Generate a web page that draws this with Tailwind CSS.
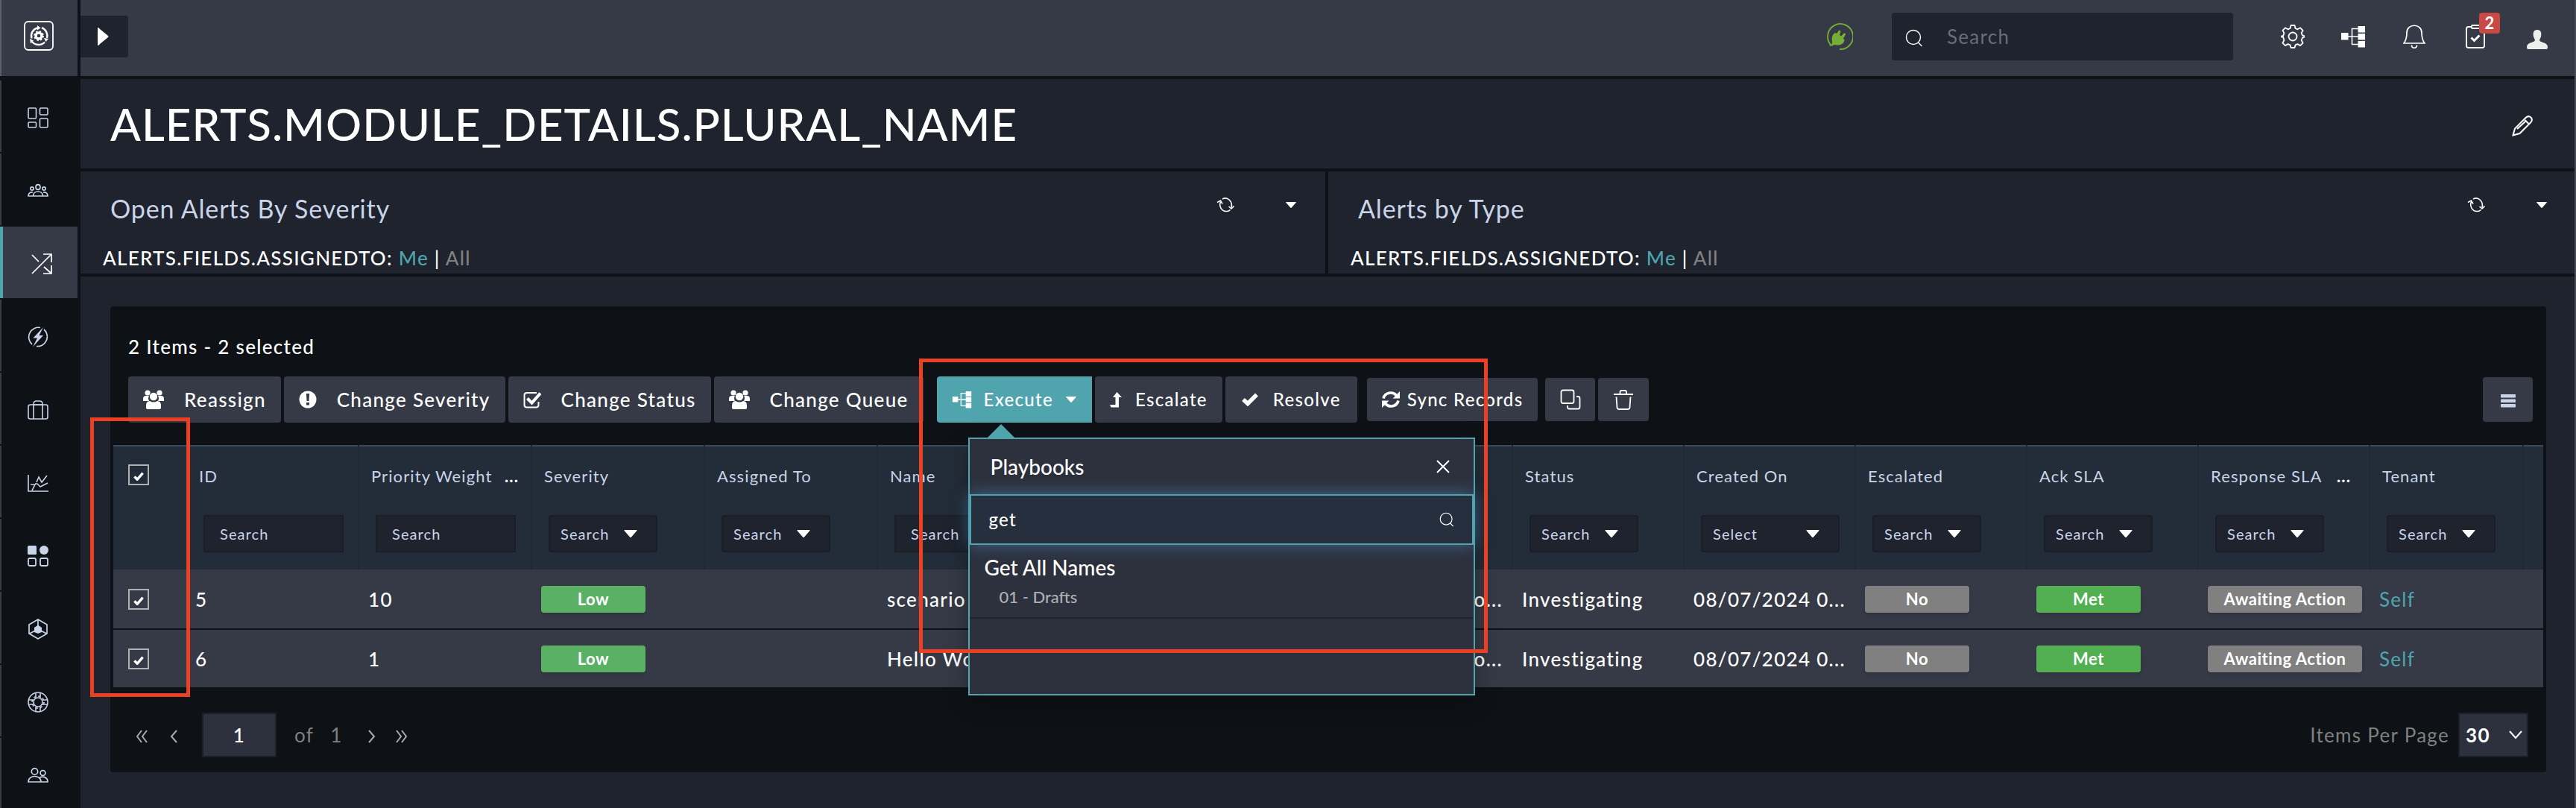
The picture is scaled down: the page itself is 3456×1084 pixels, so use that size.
<!DOCTYPE html>
<html lang="en">
<head>
<meta charset="utf-8">
<title>Alerts</title>
<script src="https://cdn.jsdelivr.net/npm/@tailwindcss/browser@4"></script>
</head>
<body class="bg-[#0e1116]">
<svg class="hidden" aria-hidden="true">
  <symbol id="i-logo" viewBox="0 0 40 40" fill="none" stroke="currentColor">
    <rect x="1" y="1" width="38" height="38" rx="5" stroke-width="1.8"/>
    <path d="M10.5 23.5A11 11 0 0 1 18 9.5M24 9.2A11.5 11.5 0 0 1 31 23M28 28.5A11.5 11.5 0 0 1 11 28" stroke-width="2.4"/>
    <path d="M18 6l4.500 3.500-4.500 3zM33 24l-3.500 4-2.500-5zM8 24l5 2.500-4 4z" fill="currentColor" stroke="none"/>
    <circle cx="20" cy="20" r="4" stroke-width="3.4"/>
    <circle cx="20" cy="20" r="6" stroke-width="1.800" stroke-dasharray="2.400 2.310"/>
  </symbol>
  <symbol id="i-dash" viewBox="0 0 28 28" fill="none" stroke="currentColor" stroke-width="1.6">
    <rect x="1" y="1" width="10.500" height="14" rx="1.200"/><rect x="16.500" y="1" width="10.500" height="9" rx="1.200"/><rect x="1" y="20" width="10.500" height="7" rx="1.200"/><rect x="16.500" y="15" width="10.500" height="12" rx="1.200"/>
  </symbol>
  <symbol id="i-team" viewBox="0 0 28 28" fill="none" stroke="currentColor" stroke-width="1.7">
    <ellipse cx="14" cy="9" rx="3" ry="3.400"/><circle cx="6" cy="11" r="2.200"/><circle cx="22" cy="11" r="2.200"/>
    <path d="M7.500 21c0-8 13-8 13 0zM7 21H1c0-4 2.500-5.500 6-5M21 21h6c0-4-2.500-5.500-6-5"/>
  </symbol>
  <symbol id="i-shuffle" viewBox="0 0 28 28" fill="none" stroke="currentColor" stroke-width="1.7">
    <path d="M1 27L26.500 1.500M16 1h11v11M1 2l9 9M17 18l9.500 8.500M16 27h11V16"/>
  </symbol>
  <symbol id="i-bolt" viewBox="0 0 28 28" fill="none" stroke="currentColor" stroke-width="1.7">
    <path d="M17 1.500A13 13 0 0 0 6 24M22 4A13 13 0 0 1 12 26.600"/><path d="M21 1L7.500 15.500H13L7 27.500 21 12h-5.500z" fill="currentColor" stroke="none"/>
  </symbol>
  <symbol id="i-case" viewBox="0 0 28 28" fill="none" stroke="currentColor" stroke-width="1.6">
    <rect x="1" y="7" width="26" height="19" rx="2.500"/><path d="M8 26V6q0-4 4-4h4q4 0 4 4v20M8 7h12"/>
  </symbol>
  <symbol id="i-chart" viewBox="0 0 28 28" fill="none" stroke="currentColor" stroke-width="1.6">
    <path d="M1 3v22h27M6 24l4-8h-6M10 15h3l4 4 10-5M12 13l3-7 4 7 7-9"/>
  </symbol>
  <symbol id="i-apps" viewBox="0 0 28 28" fill="none" stroke="currentColor" stroke-width="1.8">
    <rect x="0" y="0" width="12" height="12" rx="1.500" fill="currentColor" stroke="none"/><circle cx="22" cy="6" r="6" fill="currentColor" stroke="none"/>
    <rect x="1" y="17" width="10" height="10" rx="2"/><rect x="17" y="17" width="10" height="10" rx="2"/>
  </symbol>
  <symbol id="i-hex" viewBox="0 0 28 28" fill="none" stroke="currentColor" stroke-width="1.7">
    <path d="M14 1l12 7v12l-12 7-12-7V8zM14 1v9M2.500 20l8-4M25.500 20l-8-4"/><path d="M14 8.500l5 3.500v6L14 20l-5-2v-6z" fill="currentColor" stroke="none"/>
  </symbol>
  <symbol id="i-ring" viewBox="0 0 28 28" fill="none" stroke="currentColor" stroke-width="1.6">
    <circle cx="14" cy="14" r="13"/><circle cx="14" cy="14" r="6"/>
    <path d="M11 1.500V8M17 1.500V8M11 20v6.500M17 20v6.500M1.500 11H8M1.500 17H8M20 11h6.500M20 17h6.500"/><circle cx="14" cy="14" r="8" stroke-dasharray="3 3.280"/>
  </symbol>
  <symbol id="i-users" viewBox="0 0 28 28" fill="none" stroke="currentColor" stroke-width="1.7">
    <circle cx="9.500" cy="9" r="4.200"/><circle cx="20.500" cy="11" r="3.400"/><path d="M1 23c0-10 17-10 17 0zM16 17.500c5-3 11-.5 11 5.500h-9"/>
  </symbol>
  <symbol id="i-tree" viewBox="0 0 34 30" fill="none" stroke="currentColor" stroke-width="1.6">
    <path d="M10 15h14M15.500 15V4.500H24M15.500 15v10.500H24"/><path d="M1 10h9.500v9.500H1zM23.500 1H33v8.500h-9.500zM23.500 11H33v8.500h-9.500zM23.500 21H33v8.500h-9.500z" fill="currentColor" stroke="none"/>
  </symbol>
  <symbol id="i-search" viewBox="0 0 24 24" fill="none" stroke="currentColor" stroke-width="1.4">
    <circle cx="11" cy="11" r="9.500"/><path d="M17.500 18l5 5"/>
  </symbol>
  <symbol id="i-people" viewBox="0 0 28 28" fill="currentColor">
    <circle cx="6" cy="5" r="3.600"/><circle cx="22" cy="5" r="3.600"/><path d="M0 16V13q0-4 4-4h4q-2 3 0 7zM28 16V13q0-4-4-4h-4q2 3 0 7z"/><circle cx="14" cy="10" r="5.200"/><path d="M4 25v-3q0-6 5-6 5 3 10 0 5 0 5 6v3q0 2-2 2H6q-2 0-2-2z"/>
  </symbol>
  <symbol id="i-sync" viewBox="0 0 24 24" fill="none" stroke="currentColor" stroke-width="3.6">
    <path d="M2 10.500A10 9.500 0 0 1 19.500 6.500M22 13.500A10 9.500 0 0 1 4.500 17.500"/><path d="M24 1v9.500h-9.500zM0 23v-9.500h9.500z" fill="currentColor" stroke="none"/>
  </symbol>
  <symbol id="i-refresh" viewBox="0 0 24 20" fill="none" stroke="currentColor" stroke-width="1.6">
    <path d="M5.500 5.500C3 12 7 19 14 18.500c2 0 3.500-1 4.500-2M8 2c7-3.500 14 3 12 11.500M1 6.500l4.500-2.500L8 8.500M16.500 12l3.500 3 3.500-3.500"/>
  </symbol>
  <symbol id="i-tick" viewBox="0 0 16 14" fill="none" stroke="currentColor" stroke-width="4">
    <path d="M1.500 7.500l4.300 4.500L14.500 2"/>
  </symbol>
  <symbol id="i-down" viewBox="0 0 18 10" fill="currentColor"><path d="M1 0h16q1 0 .4 1L10 9.500q-1 1-2 0L.6 1Q0 0 1 0z"/></symbol>
</svg>

<div class="relative flex min-h-[1084px] overflow-hidden border-r-2 border-[#474b55] bg-[#0e1116] font-['Lato',sans-serif] text-[26px] leading-8 text-white">

  <!-- Sidebar -->
  <nav aria-label="Main" class="flex h-[1084px] w-[104px] shrink-0 flex-col overflow-hidden text-[#c9d4e8]">
    <a href="#" aria-label="Home" class="flex h-[102px] shrink-0 items-center justify-center border-l-2 border-[#5b5f69] bg-[#353a46] pr-0.5 pb-1.5 text-white"><svg class="size-10"><use href="#i-logo"/></svg></a>
    <div class="flex flex-col gap-0.5 pt-1.5">
      <a href="#" aria-label="Dashboard" class="flex h-24 shrink-0 items-center justify-center border-l-2 border-[#3a3d43] pt-1 pr-1"><svg class="size-7"><use href="#i-dash"/></svg></a>
      <a href="#" aria-label="Queues" class="flex h-24 shrink-0 items-center justify-center border-l-2 border-[#3a3d43] pt-1 pr-1"><svg class="size-7"><use href="#i-team"/></svg></a>
      <a href="#" aria-label="Incident Response" class="flex h-24 shrink-0 items-center justify-center border-l-4 border-[#4fa4ae] bg-[#353a46] pt-1 pl-1 text-white"><svg class="size-7"><use href="#i-shuffle"/></svg></a>
      <a href="#" aria-label="Automation" class="flex h-24 shrink-0 items-center justify-center border-l-2 border-[#3a3d43] pt-1 pr-1"><svg class="size-7"><use href="#i-bolt"/></svg></a>
      <a href="#" aria-label="Resources" class="flex h-24 shrink-0 items-center justify-center border-l-2 border-[#3a3d43] pt-1 pr-1"><svg class="size-7"><use href="#i-case"/></svg></a>
      <a href="#" aria-label="Reports" class="flex h-24 shrink-0 items-center justify-center border-l-2 border-[#3a3d43] pt-1 pr-1"><svg class="size-7"><use href="#i-chart"/></svg></a>
      <a href="#" aria-label="Widgets" class="flex h-24 shrink-0 items-center justify-center border-l-2 border-[#3a3d43] pt-1 pr-1"><svg class="size-7"><use href="#i-apps"/></svg></a>
      <a href="#" aria-label="Content Hub" class="flex h-24 shrink-0 items-center justify-center border-l-2 border-[#3a3d43] pt-1 pr-1"><svg class="size-7"><use href="#i-hex"/></svg></a>
      <a href="#" aria-label="Help" class="flex h-24 shrink-0 items-center justify-center border-l-2 border-[#3a3d43] pt-1 pr-1"><svg class="size-7"><use href="#i-ring"/></svg></a>
      <a href="#" aria-label="Users" class="flex h-24 shrink-0 items-center justify-center border-l-2 border-[#3a3d43] pt-1 pr-1"><svg class="size-7"><use href="#i-users"/></svg></a>
    </div>
  </nav>

  <div class="ml-1 flex min-w-0 flex-1 flex-col gap-1">
    <!-- Top bar -->
    <header class="flex h-[102px] items-center justify-between bg-[#353a46] pr-9 pb-1">
      <button type="button" aria-label="Expand menu" class="flex h-14 w-16 items-center justify-center rounded-r bg-[#1e232e] pr-1"><svg class="h-6 w-4" viewBox="0 0 16 24"><path d="M1 0v24q2 0 3-2l11-9q1-1 0-2L4 2Q3 0 1 0z" fill="currentColor"/></svg></button>
      <div class="flex items-center">
        <svg class="mr-[52px] size-9 text-[#77ae35]" viewBox="0 0 36 36" role="img" aria-label="Connected"><path d="M7 30A17 17 0 1 1 18 35" fill="none" stroke="currentColor" stroke-width="1.800"/><path d="M3 29c5 2 5-2 5-5-1-6 1-9 4-11l2 1 3-4q2-1 2.500 1L18 16l2 1.500 4-4q2.500 0 2 2l-3 5 1.500 2C24 28 18 31 12 29c-4 0-4 4-9 0z" fill="currentColor"/></svg>
        <label class="mr-16 flex h-16 w-[458px] items-center gap-8 rounded bg-[#1e232e] pr-5 pl-[18px]">
          <svg class="mt-1 size-6 shrink-0"><use href="#i-search"/></svg>
          <input type="search" placeholder="Search" aria-label="Search" class="w-full min-w-0 bg-transparent tracking-wider outline-none placeholder:text-[#686d77]">
        </label>
        <div class="flex items-center">
          <button type="button" aria-label="Settings" class="mr-12"><svg class="size-8" viewBox="0 0 32 32" fill="none" stroke="currentColor" stroke-width="1.800"><path d="M13.500 1h5l1 4 3 1.300 3.600-2 3.500 3.500-2 3.600 1.400 3 3 1v1.200l-3 1-1.400 3.400 2 3.600-3.500 3.500-3.600-2-3 1.300-1 3.600h-5l-1-3.600-3-1.300-3.600 2-3.500-3.500 2-3.600L3 16.600H1v-1.200h2l1.400-4-2-3.600L5.900 4.300l3.600 2 3-1.300z" stroke-linejoin="round"/><circle cx="16" cy="16" r="5.500"/></svg></button>
          <button type="button" aria-label="Playbooks" class="mr-[50px]"><svg class="h-[30px] w-[34px]"><use href="#i-tree"/></svg></button>
          <button type="button" aria-label="Notifications" class="mr-[54px]"><svg class="h-8 w-[30px]" viewBox="0 0 30 32" fill="none" stroke="currentColor" stroke-width="1.700"><path d="M1 25C5 20 5 15 5 11 5-2 25-2 25 11c0 4 0 9 4 14z"/><path d="M11.500 27.500c0 5 7 5 7 0"/></svg></button>
          <button type="button" aria-label="Pending tasks" class="relative mr-14"><svg class="h-8 w-[26px]" viewBox="0 0 26 32" fill="none" stroke="currentColor" stroke-width="1.800"><path d="M7 3H3.500Q1 3 1 5.500v23Q1 31 3.500 31h19q2.500 0 2.500-2.500v-23Q25 3 22.500 3H19"/><rect x="8" y="1" width="11" height="4" rx="1"/><path d="M7.500 17.500l4 4 7-7" stroke-width="3"/></svg><span class="absolute -top-4 left-[18px] flex h-7 w-7 items-center justify-center rounded bg-[#c94945] text-[22px] font-bold">2</span></button>
          <button type="button" aria-label="Profile" class="text-[#eeeeee]"><svg class="mt-2 h-[26px] w-7" viewBox="0 0 28 26" fill="currentColor"><path d="M14 0c5 0 6 4 5 9-.5 2-1.500 3-2 5 0 3 11 2.500 11 9 0 2-.5 3-2 3H2c-1.500 0-2-1-2-3 0-6.500 11-6 11-9-.5-2-1.500-3-2-5-1-5 0-9 5-9z"/></svg></button>
        </div>
      </div>
    </header>

    <!-- Page title -->
    <div class="flex h-[120px] items-center justify-between bg-[#1e232e] pr-14 pl-10">
      <h1 class="text-[60px] leading-[72px] font-medium tracking-[1px]">ALERTS.MODULE_DETAILS.PLURAL_NAME</h1>
      <button type="button" aria-label="Edit page" class="pt-1.5"><svg class="size-7" viewBox="0 0 28 28" fill="none" stroke="currentColor" stroke-width="2"><path d="M1.500 26.500l2.500-9L18.500 3q3.500-3.500 7-.5 3 3.500-.5 7L10.500 24zM17.500 6l5 5M7 18l11-10"/></svg></button>
    </div>

    <!-- Summary widgets -->
    <div class="flex gap-1">
      <section class="h-[137px] w-[1670px] shrink-0 bg-[#1e232e]">
        <div class="flex items-center justify-between pt-[30px] pr-[38px] pl-10">
          <h2 class="text-[34px] leading-10 tracking-wide text-[#c9d4e8]">Open Alerts By Severity</h2>
          <div class="flex items-center gap-[68px] pb-2.5"><button type="button" aria-label="Refresh"><svg class="h-5 w-6"><use href="#i-refresh"/></svg></button><button type="button" aria-label="Collapse"><svg class="h-2 w-4"><use href="#i-down"/></svg></button></div>
        </div>
        <p class="mt-[30px] pl-[30px] font-medium tracking-wider">ALERTS.FIELDS.ASSIGNEDTO: <a href="#" class="text-[#4fa4ae]">Me</a> | <a href="#" class="text-[#808080]">All</a></p>
      </section>
      <section class="h-[137px] min-w-0 flex-1 bg-[#1e232e]">
        <div class="flex items-center justify-between pt-[30px] pr-9 pl-10">
          <h2 class="text-[34px] leading-10 tracking-wide text-[#c9d4e8]">Alerts by Type</h2>
          <div class="flex items-center gap-[68px] pb-2.5"><button type="button" aria-label="Refresh"><svg class="h-5 w-6"><use href="#i-refresh"/></svg></button><button type="button" aria-label="Collapse"><svg class="h-2 w-4"><use href="#i-down"/></svg></button></div>
        </div>
        <p class="mt-[30px] pl-[30px] font-medium tracking-wider">ALERTS.FIELDS.ASSIGNEDTO: <a href="#" class="text-[#4fa4ae]">Me</a> | <a href="#" class="text-[#808080]">All</a></p>
      </section>
    </div>

    <!-- Records grid -->
    <main class="flex-1 bg-[#1e232e] pt-10 pr-[38px] pb-12 pl-10">
      <div class="rounded bg-[#0e1116] px-1 pt-[38px] pb-5">
        <p class="pl-5 font-medium tracking-wider">2 Items - 2 selected</p>

        <div class="mt-6 flex items-center pr-[14px] pl-5 font-medium tracking-wider">
          <button type="button" class="mr-1 flex h-[62px] items-center gap-[27px] rounded bg-[#353a46] px-5"><svg class="size-7"><use href="#i-people"/></svg>Reassign</button>
          <button type="button" class="mr-1 flex h-[62px] items-center gap-[27px] rounded bg-[#353a46] px-5"><svg class="size-6" viewBox="0 0 24 24"><circle cx="12" cy="12" r="11.500" fill="currentColor"/><path d="M9.800 4h4.400l-.8 10h-2.800zM10 16h4v3.500h-4z" fill="#353a46"/></svg>Change Severity</button>
          <button type="button" class="mr-1 flex h-[62px] items-center gap-[27px] rounded bg-[#353a46] px-5"><svg class="size-6" viewBox="0 0 24 24" fill="none" stroke="currentColor"><path d="M18 3H5Q1.500 3 1.500 6v13q0 3.500 3.500 3.500h12q3.500 0 3.500-3.500v-4" stroke-width="2"/><path d="M5.500 10.500l6 6L23 3.500" stroke-width="4"/></svg>Change Status</button>
          <button type="button" class="mr-[18px] flex h-[62px] items-center gap-[27px] rounded bg-[#353a46] px-5"><svg class="size-7"><use href="#i-people"/></svg>Change Queue</button>

          <div class="relative mr-1 text-[24px]">
            <button type="button" aria-expanded="true" class="flex h-[62px] items-center gap-4 rounded-l bg-[#4fa4ae] px-5"><svg class="h-6 w-[27px]"><use href="#i-tree"/></svg>Execute<svg class="h-2 w-4"><use href="#i-down"/></svg></button>

            <!-- Playbook picker -->
            <div class="absolute top-[82px] left-[42px] z-20 h-[346px] w-[680px] border-2 border-[#4fa4ae] bg-[#2c313d] tracking-normal shadow-[0_10px_30px_rgba(0,0,0,0.3)]">
              <svg class="absolute -top-5 left-6 h-[18px] w-9 text-[#4fa4ae]" viewBox="0 0 36 18"><path d="M18 0l18 18H0z" fill="currentColor"/></svg>
              <div class="flex h-[74px] items-center justify-between pr-8 pl-7">
                <h3 class="text-[28px]">Playbooks</h3>
                <button type="button" aria-label="Close"><svg class="size-[18px]" viewBox="0 0 18 18" fill="none" stroke="currentColor" stroke-width="2"><path d="M1 1l16 16M17 1L1 17"/></svg></button>
              </div>
              <label class="flex h-[68px] items-center border-2 border-[#4fa4ae] bg-[#262f3e] px-6 shadow-[0_0_20px_rgba(90,150,210,0.55)]">
                <input type="text" value="get" aria-label="Search playbooks" class="min-w-0 flex-1 bg-transparent tracking-wider outline-none">
                <svg class="size-5"><use href="#i-search"/></svg>
              </label>
              <a href="#" class="flex h-[99px] flex-col border-b-2 border-[#20242c] pt-3.5 pl-5">
                <span class="text-[28px]">Get All Names</span>
                <span class="mt-2 pl-5 text-[22px] text-[#aeb0b4]">01 - Drafts</span>
              </a>
            </div>
          </div>

          <button type="button" class="mr-1 flex h-[62px] items-center gap-[18px] rounded bg-[#353a46] px-5 text-[24px]"><svg class="h-[21px] w-4" viewBox="0 0 16 21" fill="currentColor"><path d="M9.500 0L16 7h-4v13.500H1.500L0 17h7.500V7H4z"/></svg>Escalate</button>
          <button type="button" class="mr-[13px] flex h-[62px] items-center gap-5 rounded bg-[#353a46] px-[22px] text-[24px]"><svg class="h-[18px] w-[22px]" viewBox="0 0 22 18" fill="none" stroke="currentColor" stroke-width="5.500"><path d="M2 9l6 5.500L20 2.500"/></svg>Resolve</button>
          <button type="button" class="mr-2.5 flex h-[58px] items-center gap-2.5 rounded bg-[#353a46] px-5 text-[24px]"><svg class="size-6"><use href="#i-sync"/></svg>Sync Records</button>
          <button type="button" aria-label="Clone" class="mr-1 flex h-[58px] w-[67px] items-center justify-center rounded bg-[#353a46]"><svg class="size-7" viewBox="0 0 28 28" fill="none" stroke="currentColor" stroke-width="1.800"><rect x="1.500" y="1.500" width="17" height="17.500" rx="2.500"/><path d="M22 10h2q2.500 0 2.500 2.500V24q0 2.500-2.500 2.500H12.500Q10 26.500 10 24v-2"/></svg></button>
          <button type="button" aria-label="Delete" class="flex h-[58px] w-[68px] items-center justify-center rounded bg-[#353a46]"><svg class="size-7" viewBox="0 0 28 28" fill="none" stroke="currentColor" stroke-width="1.800"><path d="M1 7h26M9.500 7V4q0-2 2-2h4.500q2 0 2 2v3M4.500 10.500l1 14q.2 2.500 2.500 2.500h12q2.300 0 2.500-2.500l1-14"/></svg></button>
          <button type="button" aria-label="Grid menu" class="ml-auto flex h-[60px] w-[67px] items-center justify-center rounded bg-[#353a46] text-[#c9d4e8]"><svg class="mt-1 h-[18px] w-5" viewBox="0 0 20 18" fill="currentColor"><rect width="20" height="4.500" rx="1"/><rect y="6.500" width="20" height="4.500" rx="1"/><rect y="13" width="20" height="4.500" rx="1"/></svg></button>
        </div>

        <table class="mt-[30px] w-full table-fixed border-t-2 border-[#3c4a61] text-left">
          <colgroup><col class="w-[97px]"><col class="w-[232px]"><col class="w-[232px]"><col class="w-[232px]"><col class="w-[232px]"><col><col class="w-[230px]"><col class="w-[230px]"><col class="w-[230px]"><col class="w-[230px]"><col class="w-[230px]"><col class="w-[230px]"><col class="w-[206px]"><col class="w-[27px]"></colgroup>
          <thead class="bg-[#232d39] text-[22px] tracking-wider text-[#c9d4e8]">
            <tr class="h-[166px] align-top">
              <th class="pt-6 pl-5"><span class="grid size-7 place-items-center"><input type="checkbox" checked aria-label="Select all" class="col-start-1 row-start-1 size-7 appearance-none border-2 border-[#b0b0b0]"><svg class="pointer-events-none col-start-1 row-start-1 mt-1 h-3 w-3.5 text-white"><use href="#i-tick"/></svg></span></th>
              <th class="pt-6 pr-5 pl-[18px] font-normal">ID<input type="text" placeholder="Search" aria-label="Filter ID" class="mt-9 ml-1.5 block h-[50px] w-[188px] border-2 border-[#191e27] bg-[#1e232e] px-5 text-[20px] placeholder:text-[#c9d4e8]"></th>
              <th class="border-l-2 border-[#1f2833] pt-6 pr-4 pl-4 font-normal"><span class="flex justify-between"><span class="whitespace-nowrap">Priority Weight</span><b class="text-white">...</b></span><input type="text" placeholder="Search" aria-label="Filter priority weight" class="mt-9 ml-1.5 block h-[50px] w-[188px] border-2 border-[#191e27] bg-[#1e232e] px-5 text-[20px] placeholder:text-[#c9d4e8]"></th>
              <th class="border-l-2 border-[#1f2833] pt-6 pl-4 font-normal">Severity<span class="mt-9 ml-1.5 grid w-[146px] items-center"><select aria-label="Filter severity" class="col-start-1 row-start-1 h-[50px] appearance-none rounded border-2 border-[#191e27] bg-[#1e232e] pl-3.5 text-[20px]"><option>Search</option></select><svg class="pointer-events-none col-start-1 row-start-1 mr-[27px] h-2.5 w-[18px] justify-self-end text-white"><use href="#i-down"/></svg></span></th>
              <th class="border-l-2 border-[#1f2833] pt-6 pl-4 font-normal">Assigned To<span class="mt-9 ml-1.5 grid w-[146px] items-center"><select aria-label="Filter assigned to" class="col-start-1 row-start-1 h-[50px] appearance-none rounded border-2 border-[#191e27] bg-[#1e232e] pl-3.5 text-[20px]"><option>Search</option></select><svg class="pointer-events-none col-start-1 row-start-1 mr-[27px] h-2.5 w-[18px] justify-self-end text-white"><use href="#i-down"/></svg></span></th>
              <th class="border-l-2 border-[#1f2833] pt-6 pl-4 font-normal">Name<input type="text" placeholder="Search" aria-label="Filter name" class="mt-9 ml-1.5 block h-[50px] w-[188px] border-2 border-[#191e27] bg-[#1e232e] px-5 text-[20px] placeholder:text-[#c9d4e8]"></th>
              <th></th>
              <th class="border-l-2 border-[#1f2833] pt-6 pl-4 font-normal">Status<span class="mt-9 ml-1.5 grid w-[146px] items-center"><select aria-label="Filter status" class="col-start-1 row-start-1 h-[50px] appearance-none rounded border-2 border-[#191e27] bg-[#1e232e] pl-3.5 text-[20px]"><option>Search</option></select><svg class="pointer-events-none col-start-1 row-start-1 mr-[27px] h-2.5 w-[18px] justify-self-end text-white"><use href="#i-down"/></svg></span></th>
              <th class="border-l-2 border-[#1f2833] pt-6 pl-4 font-normal">Created On<span class="mt-9 ml-1.5 grid w-[186px] items-center"><select aria-label="Filter created on" class="col-start-1 row-start-1 h-[50px] appearance-none rounded border-2 border-[#191e27] bg-[#1e232e] pl-3.5 text-[20px]"><option>Select</option></select><svg class="pointer-events-none col-start-1 row-start-1 mr-[27px] h-2.5 w-[18px] justify-self-end text-white"><use href="#i-down"/></svg></span></th>
              <th class="border-l-2 border-[#1f2833] pt-6 pl-4 font-normal">Escalated<span class="mt-9 ml-1.5 grid w-[146px] items-center"><select aria-label="Filter escalated" class="col-start-1 row-start-1 h-[50px] appearance-none rounded border-2 border-[#191e27] bg-[#1e232e] pl-3.5 text-[20px]"><option>Search</option></select><svg class="pointer-events-none col-start-1 row-start-1 mr-[27px] h-2.5 w-[18px] justify-self-end text-white"><use href="#i-down"/></svg></span></th>
              <th class="border-l-2 border-[#1f2833] pt-6 pl-4 font-normal">Ack SLA<span class="mt-9 ml-1.5 grid w-[146px] items-center"><select aria-label="Filter ack SLA" class="col-start-1 row-start-1 h-[50px] appearance-none rounded border-2 border-[#191e27] bg-[#1e232e] pl-3.5 text-[20px]"><option>Search</option></select><svg class="pointer-events-none col-start-1 row-start-1 mr-[27px] h-2.5 w-[18px] justify-self-end text-white"><use href="#i-down"/></svg></span></th>
              <th class="border-l-2 border-[#1f2833] pt-6 pr-4 pl-4 font-normal"><span class="flex justify-between"><span class="whitespace-nowrap">Response SLA</span><b class="pr-2 text-white">...</b></span><span class="mt-9 ml-1.5 grid w-[146px] items-center"><select aria-label="Filter response SLA" class="col-start-1 row-start-1 h-[50px] appearance-none rounded border-2 border-[#191e27] bg-[#1e232e] pl-3.5 text-[20px]"><option>Search</option></select><svg class="pointer-events-none col-start-1 row-start-1 mr-[27px] h-2.5 w-[18px] justify-self-end text-white"><use href="#i-down"/></svg></span></th>
              <th class="border-l-2 border-[#1f2833] pt-6 pl-4 font-normal">Tenant<span class="mt-9 ml-1.5 grid w-[146px] items-center"><select aria-label="Filter tenant" class="col-start-1 row-start-1 h-[50px] appearance-none rounded border-2 border-[#191e27] bg-[#1e232e] pl-3.5 text-[20px]"><option>Search</option></select><svg class="pointer-events-none col-start-1 row-start-1 mr-[27px] h-2.5 w-[18px] justify-self-end text-white"><use href="#i-down"/></svg></span></th>
              <th class="border-l-2 border-[#1f2833]"></th>
            </tr>
          </thead>
          <tbody class="bg-[#353a46] font-medium tracking-wider">
            <tr class="h-20 border-b-2 border-[#0e1116]">
              <td class="pl-5"><span class="grid size-7 place-items-center"><input type="checkbox" checked aria-label="Select alert 5" class="col-start-1 row-start-1 size-7 appearance-none border-2 border-[#b0b0b0]"><svg class="pointer-events-none col-start-1 row-start-1 mt-1 h-3 w-3.5"><use href="#i-tick"/></svg></span></td>
              <td class="pl-[13px]">5</td>
              <td class="pl-[13px]">10</td>
              <td class="pl-[13px]"><span class="flex h-9 w-[140px] items-center justify-center rounded bg-[#5ab065] text-[22px] font-bold tracking-wide shadow-md">Low</span></td>
              <td></td>
              <td class="pl-[13px]">scenario</td>
              <td class="pr-[13px] text-right">o...</td>
              <td class="pl-[13px]">Investigating</td>
              <td class="pl-[13px] whitespace-nowrap">08/07/2024 0...</td>
              <td class="pl-[13px]"><span class="flex h-9 w-[140px] items-center justify-center rounded bg-[#808080] text-[22px] font-bold tracking-wide shadow-md">No</span></td>
              <td class="pl-[13px]"><span class="flex h-9 w-[140px] items-center justify-center rounded bg-[#52b052] text-[22px] font-bold tracking-wide shadow-md">Met</span></td>
              <td class="pl-[13px]"><span class="flex h-9 w-[207px] items-center justify-center rounded bg-[#808080] text-[22px] font-bold tracking-wide whitespace-nowrap shadow-md">Awaiting Action</span></td>
              <td class="pl-[13px]"><a href="#" class="font-normal text-[#4fa4ae]">Self</a></td>
              <td></td>
            </tr>
            <tr class="h-[78px]">
              <td class="pl-5"><span class="grid size-7 place-items-center"><input type="checkbox" checked aria-label="Select alert 6" class="col-start-1 row-start-1 size-7 appearance-none border-2 border-[#b0b0b0]"><svg class="pointer-events-none col-start-1 row-start-1 mt-1 h-3 w-3.5"><use href="#i-tick"/></svg></span></td>
              <td class="pl-[13px]">6</td>
              <td class="pl-[13px]">1</td>
              <td class="pl-[13px]"><span class="flex h-9 w-[140px] items-center justify-center rounded bg-[#5ab065] text-[22px] font-bold tracking-wide shadow-md">Low</span></td>
              <td></td>
              <td class="pl-[13px]">Hello World</td>
              <td class="pr-[13px] text-right">o...</td>
              <td class="pl-[13px]">Investigating</td>
              <td class="pl-[13px] whitespace-nowrap">08/07/2024 0...</td>
              <td class="pl-[13px]"><span class="flex h-9 w-[140px] items-center justify-center rounded bg-[#808080] text-[22px] font-bold tracking-wide shadow-md">No</span></td>
              <td class="pl-[13px]"><span class="flex h-9 w-[140px] items-center justify-center rounded bg-[#52b052] text-[22px] font-bold tracking-wide shadow-md">Met</span></td>
              <td class="pl-[13px]"><span class="flex h-9 w-[207px] items-center justify-center rounded bg-[#808080] text-[22px] font-bold tracking-wide whitespace-nowrap shadow-md">Awaiting Action</span></td>
              <td class="pl-[13px]"><a href="#" class="font-normal text-[#4fa4ae]">Self</a></td>
              <td></td>
            </tr>
          </tbody>
        </table>

        <div class="flex items-center justify-between pt-[34px] pr-5 pl-[30px] tracking-wider text-[#808080]">
          <div class="flex items-center">
            <button type="button" aria-label="First page" class="mr-[30px]"><svg class="mt-1 h-[18px] w-4 text-[#aaaaaa]" viewBox="0 0 16 18" fill="none" stroke="currentColor" stroke-width="2"><path d="M8 1L2 9l6 8M15 1L9 9l6 8"/></svg></button>
            <button type="button" aria-label="Previous page" class="mr-[33px]"><svg class="mt-1 h-[18px] w-2.5 text-[#aaaaaa]" viewBox="0 0 10 18" fill="none" stroke="currentColor" stroke-width="2"><path d="M9 1L2 9l7 8"/></svg></button>
            <input type="text" value="1" aria-label="Page" class="mr-6 h-[60px] w-[100px] border-2 border-[#1a1f28] bg-[#2c313d] text-center font-medium text-white">
            <span class="mr-[22px]">of</span><span class="mr-[34px]">1</span>
            <button type="button" aria-label="Next page" class="mr-[27px]"><svg class="mt-1 h-[18px] w-2.5 text-[#aaaaaa]" viewBox="0 0 10 18" fill="none" stroke="currentColor" stroke-width="2"><path d="M1 1l7 8-7 8"/></svg></button>
            <button type="button" aria-label="Last page"><svg class="mt-1 h-[18px] w-4 text-[#aaaaaa]" viewBox="0 0 16 18" fill="none" stroke="currentColor" stroke-width="2"><path d="M1 1l6 8-6 8M8 1l6 8-6 8"/></svg></button>
          </div>
          <label class="flex items-center gap-3">Items Per Page
            <span class="grid w-[94px] items-center text-white"><select class="col-start-1 row-start-1 h-[60px] appearance-none border-2 border-[#1a1f28] bg-[#2c313d] pl-2 font-bold"><option>30</option></select><svg class="pointer-events-none col-start-1 row-start-1 mr-2 h-3 w-[18px] justify-self-end" viewBox="0 0 18 12" fill="none" stroke="currentColor" stroke-width="2"><path d="M1 1l8 9 8-9"/></svg></span>
          </label>
        </div>
      </div>
    </main>
  </div>

  <!-- Callouts -->
  <div class="pointer-events-none absolute top-[560px] left-[121px] z-30 h-[375px] w-[134px] border-5 border-[#ec4025]"></div>
  <div class="pointer-events-none absolute top-[481px] left-[1233px] z-30 h-[395px] w-[763px] border-5 border-[#ec4025]"></div>
</div>
</body>
</html>
